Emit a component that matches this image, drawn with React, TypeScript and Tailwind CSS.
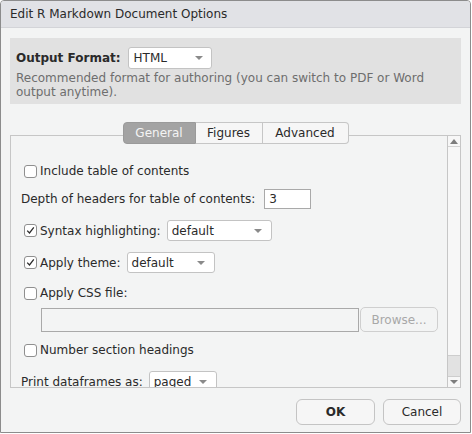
import React from "react";

function Check({ checked }: { checked?: boolean }) {
  return (
    <span className="w-[13px] h-[13px] shrink-0 rounded-[3px] border border-[#8f8f8f] bg-white flex items-center justify-center">
      {checked && (
        <svg width="9" height="9" viewBox="0 0 9 9">
          <path d="M1.2 4.6 L3.5 7 L7.8 1.4" fill="none" stroke="#2b2b2b" strokeWidth="1.3" />
        </svg>
      )}
    </span>
  );
}

function Select({ value, w }: { value: string; w: string }) {
  return (
    <div className={`${w} h-[21px] shrink-0 flex items-center justify-between pl-[4px] pr-[9px] bg-white border border-[#c3c3c3] rounded-[3px]`}>
      <span>{value}</span>
      <svg width="8" height="4" viewBox="0 0 8 4">
        <path d="M0 0 H8 L4 4 Z" fill="#8a8a8a" />
      </svg>
    </div>
  );
}

function CheckRow({ label, checked, mt }: { label: string; checked?: boolean; mt: string }) {
  return (
    <div className={`${mt} h-[20px] shrink-0 flex items-center pl-[13px]`}>
      <Check checked={checked} />
      <span className="ml-[3px]">{label}</span>
    </div>
  );
}

export default function App() {
  return (
    <div className="w-[472px] h-[434px] bg-white text-[12px] leading-[14px] text-[#2a2a2a] font-['DejaVu_Sans',sans-serif]">
      <div className="w-[471px] h-[433px] flex flex-col bg-[#f3f4f4] border border-[#8c8c8c] rounded-t-[4px] overflow-hidden">
        {/* Title bar */}
        <div className="h-[27px] shrink-0 flex items-center pl-[9px] bg-[#e1e2e6] border-b border-[#d3d4d8]">
          Edit R Markdown Document Options
        </div>

        <div className="flex-1 flex flex-col px-[9px]">
          {/* Output format box */}
          <div className="mt-[10px] h-[66px] shrink-0 bg-[#e1e1e1] pt-[9px] px-[6px]">
            <div className="flex items-center h-[22px]">
              <span className="font-bold">Output Format:</span>
              <div className="ml-[7px] w-[84px] h-[22px] flex items-center justify-between pl-[5px] pr-[8px] bg-white border border-[#c3c3c3] rounded-[3px]">
                <span>HTML</span>
                <svg width="8" height="4" viewBox="0 0 8 4">
                  <path d="M0 0 H8 L4 4 Z" fill="#8a8a8a" />
                </svg>
              </div>
            </div>
            <p className="mt-[2px] text-[#6e6e6e]">
              Recommended format for authoring (you can switch to PDF or Word output anytime).
            </p>
          </div>

          {/* Tabs */}
          <div className="mt-[18px] relative z-10 flex justify-center">
            <div className="flex h-[22px]">
              <div className="w-[73px] flex items-center justify-center bg-[#a3a3a3] text-[#f4f4f4] border border-[#9a9a9a] rounded-l-[4px]">
                General
              </div>
              <div className="w-[67px] flex items-center justify-center bg-[#f6f6f6] border-y border-r border-[#c6c6c6]">
                Figures
              </div>
              <div className="w-[86px] flex items-center justify-center bg-[#f6f6f6] border-y border-r border-[#c6c6c6] rounded-r-[4px]">
                Advanced
              </div>
            </div>
          </div>

          {/* Panel */}
          <div className="-mt-[9px] h-[253px] shrink-0 flex border border-[#c6c6c6] overflow-hidden">
            <div className="flex-1 flex flex-col overflow-hidden">
              <CheckRow mt="mt-[25px]" label="Include table of contents" />
              <div className="mt-[8px] h-[20px] shrink-0 flex items-center pl-[10px]">
                <span>Depth of headers for table of contents:</span>
                <div className="ml-[9px] w-[47px] h-[20px] flex items-center pl-[4px] bg-white border border-[#a9a9a9]">3</div>
              </div>
              <div className="mt-[11px] h-[21px] shrink-0 flex items-center pl-[13px]">
                <Check checked />
                <span className="ml-[3px] mr-[6px]">Syntax highlighting:</span>
                <Select value="default" w="w-[105px]" />
              </div>
              <div className="mt-[11px] h-[21px] shrink-0 flex items-center pl-[13px]">
                <Check checked />
                <span className="ml-[3px] mr-[6px]">Apply theme:</span>
                <Select value="default" w="w-[88px]" />
              </div>
              <CheckRow mt="mt-[10px]" label="Apply CSS file:" />
              <div className="mt-[4px] h-[25px] shrink-0 flex items-center pl-[30px]">
                <div className="w-[318px] h-[24px] bg-[#f3f4f4] border border-[#a9a9a9]" />
                <div className="ml-[1px] w-[78px] h-[25px] flex items-center justify-center text-[#a8a8a8] border border-[#cfcfcf] rounded-[5px]">
                  Browse...
                </div>
              </div>
              <CheckRow mt="mt-[8px]" label="Number section headings" />
              <div className="mt-[11px] h-[21px] shrink-0 flex items-center pl-[10px]">
                <span className="mr-[6px]">Print dataframes as:</span>
                <Select value="paged" w="w-[68px]" />
              </div>
            </div>

            {/* Scrollbar */}
            <div className="w-[13px] flex flex-col bg-[#f7f7f7] border-l border-[#c6c6c6]">
              <div className="h-[11px] flex items-center justify-center border-b border-[#d3d3d3]">
                <svg width="8" height="5" viewBox="0 0 8 5">
                  <path d="M0 5 H8 L4 0 Z" fill="#7d7d7d" />
                </svg>
              </div>
              <div className="flex-1" />
              <div className="h-[22px] bg-[#e2e2e2] border-y border-[#cdcdcd]" />
              <div className="h-[10px] flex items-center justify-center">
                <svg width="8" height="4" viewBox="0 0 8 4">
                  <path d="M0 0 H8 L4 4 Z" fill="#7d7d7d" />
                </svg>
              </div>
            </div>
          </div>

          {/* Buttons */}
          <div className="mt-[11px] flex justify-end gap-[8px]">
            <button className="w-[79px] h-[26px] font-bold bg-[#f6f6f6] border border-[#c4c4c4] rounded-[6px]">OK</button>
            <button className="w-[78px] h-[26px] bg-[#f6f6f6] border border-[#c4c4c4] rounded-[6px]">Cancel</button>
          </div>
        </div>
      </div>
    </div>
  );
}
